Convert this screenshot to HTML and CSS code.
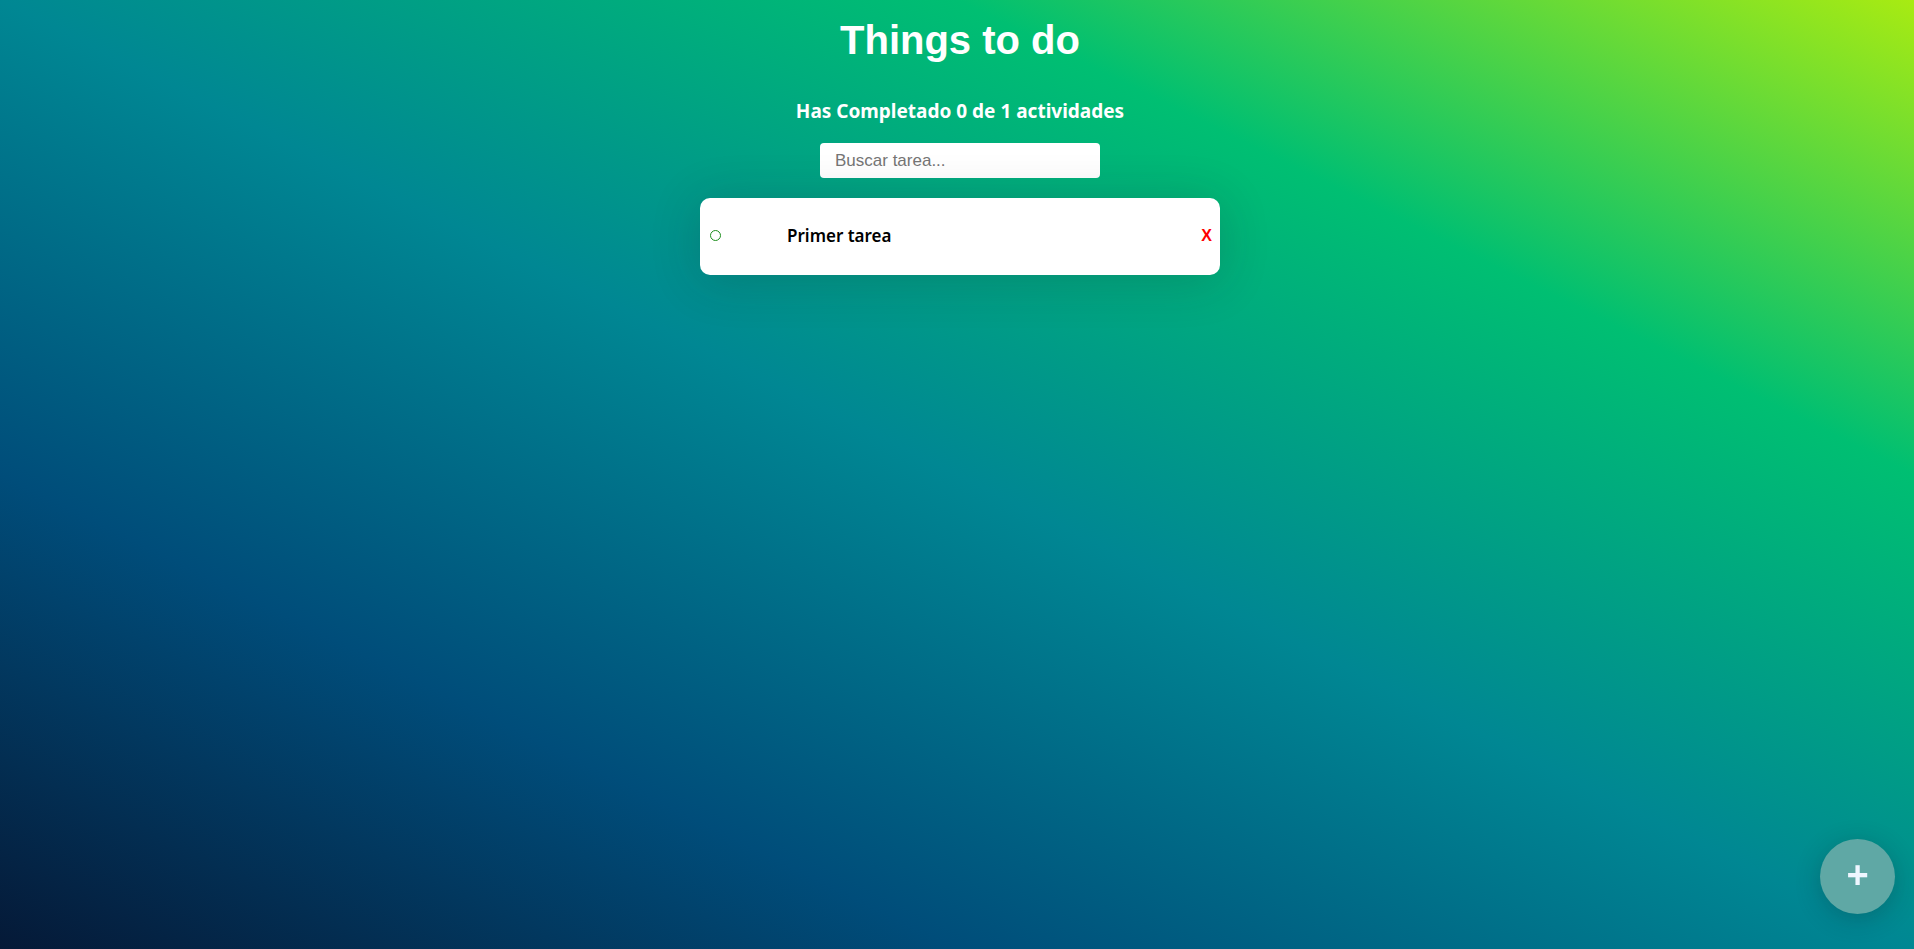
FILE: index.html
```html
<!DOCTYPE html>
<html lang="es">
<head>
<meta charset="utf-8">
<title>Things to do</title>
<link rel="stylesheet" href="styles.css">
</head>
<body>
<main class="app">
  <h1 class="title">Things to do</h1>
  <h2 class="counter">Has Completado 0 de 1 actividades</h2>
  <input class="search" type="text" placeholder="Buscar tarea...">
  <ul class="list">
    <li class="item">
      <span class="check" aria-label="completar"></span>
      <p class="item-text">Primer tarea</p>
      <span class="delete">X</span>
    </li>
  </ul>
</main>
<button class="fab" type="button">+</button>
</body>
</html>
```

FILE: styles.css
```css
html, body {
  margin: 0;
  height: 100%;
}

body {
  background: linear-gradient(to right top, #051937, #004d7a, #008793, #00bf72, #a8eb12);
  font-family: "Noto Sans", "Open Sans", sans-serif;
  overflow: hidden;
}

.app {
  display: flex;
  flex-direction: column;
  align-items: center;
  padding-left: 6px;
}

.title {
  margin: 17px 0 0;
  font-family: "Liberation Sans", Arial, sans-serif;
  font-weight: 700;
  font-size: 40px;
  line-height: 46px;
  color: #ffffff;
}

.counter {
  margin: 36px 0 0;
  font-weight: 700;
  font-size: 19px;
  line-height: 24px;
  color: #ffffff;
}

.search {
  margin-top: 20px;
  box-sizing: border-box;
  width: 280px;
  height: 35px;
  padding: 0 15px;
  border: none;
  border-radius: 4px;
  background: #ffffff;
  font-family: "Liberation Sans", Arial, sans-serif;
  font-size: 17px;
  outline: none;
}

.search::placeholder {
  color: #757575;
}

.list {
  margin: 20px 0 0;
  padding: 0;
  list-style: none;
  width: 520px;
}

.item {
  display: flex;
  align-items: center;
  height: 77px;
  padding: 0 8px 2px 10px;
  box-sizing: border-box;
  background: #ffffff;
  border-radius: 10px;
  box-shadow: 0 5px 50px rgba(32, 35, 41, 0.2);
}

.check {
  width: 9px;
  height: 9px;
  border: 1.5px solid #1e8f1e;
  border-radius: 50%;
  flex: none;
}

.item-text {
  flex: 1;
  margin: 0 0 0 66px;
  font-weight: 600;
  font-size: 17px;
  color: #000000;
}

.delete {
  color: #ff0000;
  font-family: "Liberation Sans", Arial, sans-serif;
  font-weight: 700;
  font-size: 16px;
}

.fab {
  position: fixed;
  right: 19px;
  bottom: 35px;
  width: 75px;
  height: 75px;
  border: none;
  border-radius: 50%;
  background: #5fa8a5;
  box-shadow: 0 5px 25px rgba(20, 30, 40, 0.25);
  color: #eef6ff;
  font-family: "Liberation Sans", Arial, sans-serif;
  font-weight: 700;
  font-size: 38px;
  line-height: 1;
  display: flex;
  align-items: center;
  justify-content: center;
  padding: 0 0 3px;
}
```
